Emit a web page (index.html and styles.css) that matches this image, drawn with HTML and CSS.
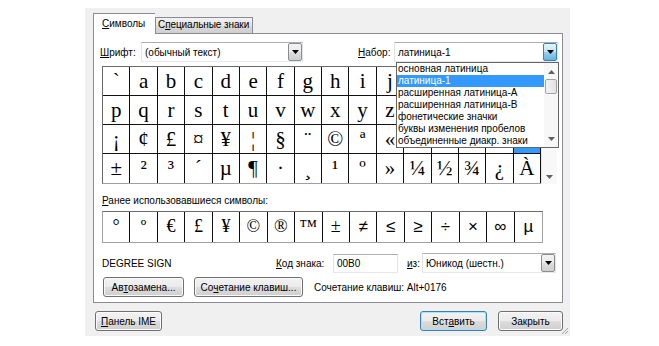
FILE: index.html
```html
<!DOCTYPE html>
<html lang="ru">
<head>
<meta charset="utf-8">
<title>Символ</title>
<link rel="stylesheet" href="styles.css">
</head>
<body>
<div class="dialog">
  <div class="tabs">
    <div class="tab active"><u>С</u>имволы</div>
    <div class="tab">С<u>п</u>ециальные знаки</div>
  </div>
  <div class="panel">
    <div class="top-row">
      <span class="lbl lbl-font"><u>Ш</u>рифт:</span>
      <div class="select font-select">
        <span class="sel-text">(обычный текст)</span>
        <span class="drop-btn"><svg width="7" height="4" viewBox="0 0 7 4"><path d="M0 0h7L3.5 4z" fill="#000"/></svg></span>
      </div>
      <span class="lbl lbl-set"><u>Н</u>абор:</span>
      <div class="select set-select">
        <span class="sel-text">латиница-1</span>
        <span class="drop-btn hot"><svg width="7" height="4" viewBox="0 0 7 4"><path d="M0 0h7L3.5 4z" fill="#000"/></svg></span>
        <div class="list">
          <div class="items">
            <div class="item">основная латиница</div>
            <div class="item sel">латиница-1</div>
            <div class="item">расширенная латиница-A</div>
            <div class="item">расширенная латиница-B</div>
            <div class="item">фонетические значки</div>
            <div class="item">буквы изменения пробелов</div>
            <div class="item">объединенные диакр. знаки</div>
          </div>
          <div class="list-scroll">
            <svg class="arr up" width="7" height="4" viewBox="0 0 7 4"><path d="M0 4h7L3.5 0z" fill="#606060"/></svg>
            <div class="thumb"></div>
            <svg class="arr down" width="7" height="4" viewBox="0 0 7 4"><path d="M0 0h7L3.5 4z" fill="#606060"/></svg>
          </div>
        </div>
      </div>
    </div>

    <div class="charmap">
      <div class="cells">
        <div class="c">`</div><div class="c">a</div><div class="c">b</div><div class="c">c</div><div class="c">d</div><div class="c">e</div><div class="c">f</div><div class="c">g</div><div class="c">h</div><div class="c">i</div><div class="c">j</div><div class="c">k</div><div class="c">l</div><div class="c">m</div><div class="c">n</div><div class="c">o</div>
        <div class="c">p</div><div class="c">q</div><div class="c">r</div><div class="c">s</div><div class="c">t</div><div class="c">u</div><div class="c">v</div><div class="c">w</div><div class="c">x</div><div class="c">y</div><div class="c">z</div><div class="c">{</div><div class="c">|</div><div class="c">}</div><div class="c">~</div><div class="c"></div>
        <div class="c">¡</div><div class="c">¢</div><div class="c">£</div><div class="c">¤</div><div class="c">¥</div><div class="c">¦</div><div class="c">§</div><div class="c">¨</div><div class="c">©</div><div class="c">ª</div><div class="c">«</div><div class="c">¬</div><div class="c"></div><div class="c">®</div><div class="c">¯</div><div class="c on">°</div>
        <div class="c">±</div><div class="c">²</div><div class="c">³</div><div class="c">´</div><div class="c">µ</div><div class="c">¶</div><div class="c">·</div><div class="c">¸</div><div class="c">¹</div><div class="c">º</div><div class="c">»</div><div class="c">¼</div><div class="c">½</div><div class="c">¾</div><div class="c">¿</div><div class="c">À</div>
      </div>
      <div class="vscroll">
        <svg class="arr" width="7" height="4" viewBox="0 0 7 4"><path d="M0 4h7L3.5 0z" fill="#606060"/></svg>
        <div class="vthumb"></div>
        <svg class="arr" width="7" height="4" viewBox="0 0 7 4"><path d="M0 0h7L3.5 4z" fill="#606060"/></svg>
      </div>
    </div>

    <div class="recent-label"><u>Р</u>анее использовавшиеся символы:</div>
    <div class="recent">
      <div class="r">°</div><div class="r">º</div><div class="r">€</div><div class="r">£</div><div class="r">¥</div><div class="r">©</div><div class="r">®</div><div class="r">™</div><div class="r">±</div><div class="r sans">≠</div><div class="r sans">≤</div><div class="r sans">≥</div><div class="r sans">÷</div><div class="r sans">×</div><div class="r sans">∞</div><div class="r sans">µ</div>
    </div>

    <div class="info-row">
      <span class="char-name">DEGREE SIGN</span>
      <span class="lbl lbl-code"><u>К</u>од знака:</span>
      <div class="input">00B0</div>
      <span class="lbl lbl-from"><u>и</u>з:</span>
      <div class="select from-select">
        <span class="sel-text">Юникод (шестн.)</span>
        <span class="drop-btn"><svg width="7" height="4" viewBox="0 0 7 4"><path d="M0 0h7L3.5 4z" fill="#000"/></svg></span>
      </div>
    </div>

    <div class="btn-row">
      <div class="btn b-auto">Ав<u>т</u>озамена...</div>
      <div class="btn b-keys">Со<u>ч</u>етание клавиш...</div>
      <span class="shortcut">Сочетание клавиш: Alt+0176</span>
    </div>
  </div>

  <div class="footer">
    <div class="btn b-ime"><u>П</u>анель IME</div>
    <div class="btn b-insert focus">Вст<u>а</u>вить</div>
    <div class="btn b-close">Закрыть</div>
  </div>

  <svg class="grip" width="10" height="10" viewBox="0 0 10 10">
    <path d="M9 3L3 9M9 6L6 9" stroke="#a0a0a0" stroke-width="1"/>
  </svg>
</div>
</body>
</html>
```

FILE: styles.css
```css
* { box-sizing: border-box; }

body {
  margin: 0;
  background: #ffffff;
  font-family: "Liberation Sans", Arial, sans-serif;
  font-size: 10px;
  color: #000;
}

u { text-decoration: underline; text-underline-offset: 1px; }

.dialog {
  position: relative;
  margin: 8px 0 0 85px;
  width: 485px;
  height: 328px;
  background: #f0f0f0;
  padding: 5px 7px 0 8px;
  display: flex;
  flex-direction: column;
}

/* tabs */
.tabs {
  display: flex;
  align-items: flex-end;
  height: 20px;
  position: relative;
  z-index: 2;
}
.tab {
  height: 16px;
  line-height: 14px;
  padding: 0 0 0 2px;
  border: 1px solid #898c95;
  border-bottom: none;
  background: linear-gradient(#f2f2f2, #e3e3e3 50%, #d9d9d9 51%, #d0d0d0);
  white-space: nowrap;
  width: 98px;
  letter-spacing: -0.1px;
}
.tab.active {
  height: 21px;
  margin-bottom: -1px;
  width: 62px;
  padding: 3px 0 0 8px;
  background: #ffffff;
  border-right: none;
  letter-spacing: 0;
}

/* panel */
.panel {
  border: 1px solid #898c95;
  background: #ffffff;
  height: 270px;
  padding: 8px 0 0 6px;
  display: flex;
  flex-direction: column;
}

.top-row {
  display: flex;
  align-items: center;
  height: 20px;
  position: relative;
  z-index: 3;
}
.lbl { white-space: nowrap; }
.lbl-font { width: 41px; }
.lbl-set { width: 36px; margin-left: 55px; }

.select {
  position: relative;
  height: 20px;
  border: 1px solid #abadb3;
  border-left-color: #e2e3ea;
  border-right-color: #e2e3ea;
  border-bottom-color: #e3e9ef;
  background: #fff;
  display: flex;
  align-items: center;
  padding-left: 3px;
}
.sel-text { white-space: nowrap; flex: 1; }
.font-select { width: 162px; }
.set-select { width: 164px; }

.drop-btn {
  width: 14px;
  height: 18px;
  border: 1px solid #8d8d8d;
  border-radius: 2px;
  background: linear-gradient(#f2f2f2, #ebebeb 50%, #dddddd 51%, #cfcfcf);
  display: flex;
  align-items: center;
  justify-content: center;
}
.drop-btn.hot {
  border-color: #3c7fb1;
  background: linear-gradient(#e5f4fc, #c4e5f6 50%, #98d1ef 51%, #68b3db);
}

.list {
  position: absolute;
  left: 1px;
  top: 19px;
  width: 163px;
  height: 86px;
  border: 1px solid #646464;
  background: #fff;
  display: flex;
}
.items { flex: 1; }
.item {
  height: 12px;
  line-height: 12px;
  padding-left: 1px;
  white-space: nowrap;
  overflow: hidden;
}
.item.sel { background: #3399ff; color: #fff; }
.list-scroll {
  width: 14px;
  background: #f7f7f7;
  display: flex;
  flex-direction: column;
  align-items: center;
  padding-top: 7px;
}
.list-scroll .thumb {
  width: 12px;
  height: 15px;
  margin-top: 5px;
  border: 1px solid #a3a3a3;
  border-radius: 2px;
  background: linear-gradient(90deg, #f3f3f3, #e3e3e3);
}
.list-scroll .down { margin-top: auto; margin-bottom: 6px; }

/* main character grid */
.charmap {
  display: flex;
  margin: 4px 0 0 2px;
  width: 455px;
  height: 118px;
}
.cells {
  width: 439px;
  display: grid;
  grid-template-columns: repeat(16, 1fr);
  grid-template-rows: repeat(4, 29px);
  border-left: 1px solid #6a6a6a;
  border-top: 1px solid #6a6a6a;
  border-bottom: 1px solid #a0a0a0;
}
.c {
  border-right: 1px solid #111;
  border-bottom: 1px solid #111;
  font-family: "Liberation Serif", "Times New Roman", serif;
  font-size: 21px;
  line-height: 28px;
  text-align: center;
  overflow: hidden;
}
.cells .c:nth-child(n+49) { border-bottom: none; }
.c.on { background: #3399ff; color: #fff; }

.vscroll {
  width: 16px;
  background: #f8f8f8;
  border-left: 1px solid #e6e6e6;
  display: flex;
  flex-direction: column;
  align-items: center;
  justify-content: space-between;
  padding: 6px 0 5px;
}
.vthumb { flex: 1; }

/* recent */
.recent-label {
  margin: 10px 0 0 2px;
  height: 13px;
  line-height: 13px;
}
.recent {
  margin: 4px 0 0 2px;
  width: 441px;
  height: 32px;
  display: grid;
  grid-template-columns: repeat(16, 1fr);
  border: 1px solid #a0a0a0;
  border-top-color: #6a6a6a;
}
.r {
  border-right: 1px solid #111;
  font-family: "Liberation Serif", "Times New Roman", serif;
  font-size: 18px;
  line-height: 29px;
  text-align: center;
}
.r:last-child { border-right: none; }
.r.sans { font-family: "Liberation Sans", Arial, sans-serif; font-size: 17px; }

/* info row */
.info-row {
  margin: 10px 0 0 2px;
  display: flex;
  align-items: center;
  height: 20px;
}
.char-name { width: 174px; }
.lbl-code { width: 57px; }
.input {
  width: 65px;
  height: 19px;
  border: 1px solid #abadb3;
  border-left-color: #e2e3ea;
  border-right-color: #e2e3ea;
  border-bottom-color: #e3e9ef;
  background: #fff;
  padding: 3px 0 0 3px;
}
.lbl-from { margin-left: 9px; width: 15px; }
.from-select { width: 134px; }

/* buttons */
.btn-row {
  margin: 4px 0 0 3px;
  display: flex;
  align-items: center;
  height: 20px;
}
.btn {
  height: 20px;
  border: 1px solid #707070;
  border-radius: 3px;
  background: linear-gradient(#f2f2f2, #ebebeb 50%, #dddddd 51%, #cfcfcf);
  box-shadow: inset 0 0 0 1px #fbfbfb;
  display: flex;
  align-items: center;
  justify-content: center;
  white-space: nowrap;
}
.b-auto { width: 81px; }
.b-keys { width: 109px; margin-left: 10px; }
.shortcut { margin-left: 11px; }

.footer {
  margin-top: 8px;
  display: flex;
  align-items: center;
  height: 20px;
}
.b-ime { width: 67px; margin-left: 2px; }
.b-insert { width: 67px; margin-left: auto; }
.b-close { width: 65px; margin-left: 11px; }
.btn.focus {
  border-color: #3c7fb1;
  box-shadow: inset 0 0 0 1px #a8e3fa;
}

.grip {
  position: absolute;
  right: 1px;
  bottom: 1px;
}
```
